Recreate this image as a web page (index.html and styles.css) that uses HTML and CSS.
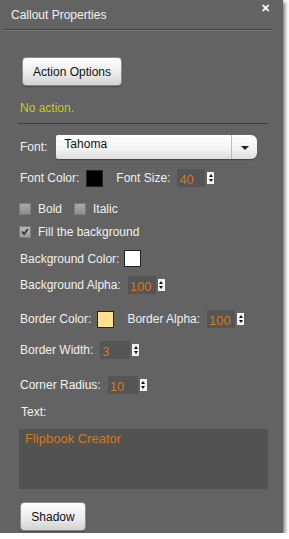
FILE: index.html
```html
<!DOCTYPE html>
<html lang="en">
<head>
    <meta charset="UTF-8">
    <title>Callout Properties</title>
    <link rel="stylesheet" href="styles.css">
</head>
<body>
    <div class="panel">
        <div class="title-bar">
            <span class="title">Callout Properties</span>
            <span class="close">&#x2715;</span>
        </div>
        <div class="title-line"></div>

        <div class="content">
            <button type="button" class="btn action-btn">Action Options</button>
            <div class="row no-action">No action.</div>
            <div class="divider"></div>

            <div class="row font-row">
                <span class="label">Font:</span>
                <div class="select">
                    <span class="select-value">Tahoma</span>
                    <span class="select-arrow"></span>
                </div>
            </div>

            <div class="row color-row">
                <span class="label">Font Color:</span>
                <span class="swatch swatch-black"></span>
                <span class="label gap">Font Size:</span>
                <div class="spinner"><span class="spin-value">40</span></div>
                <span class="spin-arrows"><i class="up"></i><i class="down"></i></span>
            </div>

            <div class="row check-row bold-row">
                <span class="checkbox"></span><span class="label">Bold</span>
                <span class="checkbox italic-box"></span><span class="label">Italic</span>
            </div>

            <div class="row check-row fill-row">
                <span class="checkbox checked">
                    <svg width="12" height="12" viewBox="0 0 12 12"><path d="M2.5 5.5 L5 8.5 L9.5 2.5" fill="none" stroke="#333" stroke-width="2"/></svg>
                </span><span class="label">Fill the background</span>
            </div>

            <div class="row bg-color-row">
                <span class="label">Background Color:</span>
                <span class="swatch swatch-white"></span>
            </div>

            <div class="row bg-alpha-row">
                <span class="label">Background Alpha:</span>
                <div class="spinner"><span class="spin-value">100</span></div>
                <span class="spin-arrows"><i class="up"></i><i class="down"></i></span>
            </div>

            <div class="row border-color-row">
                <span class="label">Border Color:</span>
                <span class="swatch swatch-yellow"></span>
                <span class="label gap">Border Alpha:</span>
                <div class="spinner"><span class="spin-value">100</span></div>
                <span class="spin-arrows"><i class="up"></i><i class="down"></i></span>
            </div>

            <div class="row border-width-row">
                <span class="label">Border Width:</span>
                <div class="spinner wide"><span class="spin-value">3</span></div>
                <span class="spin-arrows"><i class="up"></i><i class="down"></i></span>
            </div>

            <div class="row radius-row">
                <span class="label">Corner Radius:</span>
                <div class="spinner wide"><span class="spin-value">10</span></div>
                <span class="spin-arrows"><i class="up"></i><i class="down"></i></span>
            </div>

            <div class="row text-label-row"><span class="label">Text:</span></div>
            <div class="text-box">Flipbook Creator</div>

            <button type="button" class="btn shadow-btn">Shadow</button>
        </div>
    </div>
</body>
</html>
```

FILE: styles.css
```css
body {
    margin: 0;
    background: #ffffff;
    font-family: "Liberation Sans", Arial, sans-serif;
    font-size: 12px;
}

.panel {
    width: 283px;
    height: 533px;
    background: #636363;
    box-shadow: 2px 2px 4px rgba(0, 0, 0, 0.55);
    overflow: hidden;
}

.title-bar {
    height: 29px;
    display: flex;
    align-items: center;
    justify-content: space-between;
    padding: 0 12px 0 11px;
    color: #f2f2f2;
    position: relative;
}

.title {
    margin-top: 1px;
}

.close {
    position: absolute;
    right: 13px;
    top: 2px;
    font-size: 11px;
    font-weight: bold;
    color: #ffffff;
}

.title-line {
    margin: 0 10px 0 3px;
    height: 1px;
    background: #454545;
    border-bottom: 1px solid #7a7a7a;
}

.content {
    padding-left: 19px;
}

.row {
    display: flex;
    align-items: center;
    color: #f0f0f0;
}

.btn {
    display: block;
    height: 29px;
    border: 1px solid #8c8c8c;
    border-radius: 4px;
    background: linear-gradient(#ffffff, #e9e9e9 60%, #d2d2d2);
    font-family: "Liberation Sans", Arial, sans-serif;
    font-size: 12px;
    color: #111;
    padding: 0;
    box-shadow: 0 1px 1px rgba(0, 0, 0, 0.3);
}

.action-btn {
    margin: 26px 0 0 3px;
    width: 100px;
}

.no-action {
    margin-top: 14px;
    height: 16px;
    padding-left: 1px;
    color: #c3cc1e;
}

.divider {
    margin: 7px 15px 0 -1px;
    height: 1px;
    background: #3e3e3e;
}

.label {
    white-space: nowrap;
    padding-left: 1px;
}

.gap {
    margin-left: 12px;
}

.font-row {
    margin-top: 11px;
    height: 24px;
}

.select {
    margin-left: 9px;
    width: 201px;
    height: 24px;
    box-sizing: border-box;
    border-radius: 2px 6px 6px 2px;
    background: linear-gradient(#ffffff, #f4f4f4 55%, #dedede);
    display: flex;
    align-items: center;
    justify-content: space-between;
    box-shadow: 0 1px 1px rgba(0, 0, 0, 0.3);
}

.select-value {
    color: #111;
    padding-left: 8px;
    margin-top: -6px;
}

.select-arrow {
    width: 25px;
    height: 24px;
    border-left: 1px solid #bdbdbd;
    position: relative;
}

.select-arrow::after {
    content: "";
    position: absolute;
    left: 9px;
    top: 11px;
    border-left: 4px solid transparent;
    border-right: 4px solid transparent;
    border-top: 4px solid #222;
}

.color-row {
    margin-top: 10px;
    height: 18px;
}

.swatch {
    display: inline-block;
    width: 17px;
    height: 17px;
    box-sizing: border-box;
    border: 1px solid #222;
    margin-left: 6px;
}

.swatch-black {
    background: #000;
    margin-left: 7px;
}

.swatch-white {
    background: #fff;
    margin-left: 5px;
}

.swatch-yellow {
    background: #ffe08e;
    margin-left: 6px;
}

.spinner {
    margin-left: 7px;
    width: 28px;
    height: 18px;
    background: #555555;
    display: flex;
    align-items: center;
}

.spinner.wide {
    width: 30px;
    margin-left: 7px;
}

.spin-value {
    color: #d4791c;
    font-size: 13px;
    padding-left: 2px;
    margin-top: 2px;
}

.spin-arrows {
    margin-left: 2px;
    width: 7px;
    height: 12px;
    background: #f4f4f4;
    display: flex;
    flex-direction: column;
    align-items: center;
    justify-content: center;
    gap: 2px;
}

.spin-arrows i {
    display: block;
    border-left: 2px solid transparent;
    border-right: 2px solid transparent;
}

.spin-arrows .up {
    border-bottom: 3px solid #111;
}

.spin-arrows .down {
    border-top: 3px solid #111;
}

.check-row .label {
    margin-left: 6px;
}

.bold-row {
    margin-top: 15px;
    height: 14px;
}

.fill-row {
    margin-top: 9px;
    height: 14px;
}

.checkbox {
    width: 12px;
    height: 12px;
    box-sizing: border-box;
    border: 1px solid #7c7c7c;
    background: linear-gradient(#a8a8a8, #8d8d8d);
    display: flex;
    align-items: center;
    justify-content: center;
}

.italic-box {
    margin-left: 12px;
}

.checked {
    background: linear-gradient(#b8b8b8, #9c9c9c);
}

.bg-color-row {
    margin-top: 11px;
    height: 17px;
}

.bg-alpha-row {
    margin-top: 9px;
    height: 18px;
}

.border-color-row {
    margin-top: 16px;
    height: 18px;
}

.border-width-row {
    margin-top: 13px;
    height: 18px;
}

.radius-row {
    margin-top: 17px;
    height: 18px;
}

.text-label-row {
    margin-top: 10px;
    height: 16px;
    padding-left: 1px;
}

.text-box {
    margin: 9px 15px 0 0;
    height: 60px;
    background: #525252;
    color: #d4791c;
    font-size: 13px;
    padding: 2px 6px;
    box-sizing: border-box;
}

.shadow-btn {
    margin: 13px 0 0 1px;
    width: 66px;
}
```
